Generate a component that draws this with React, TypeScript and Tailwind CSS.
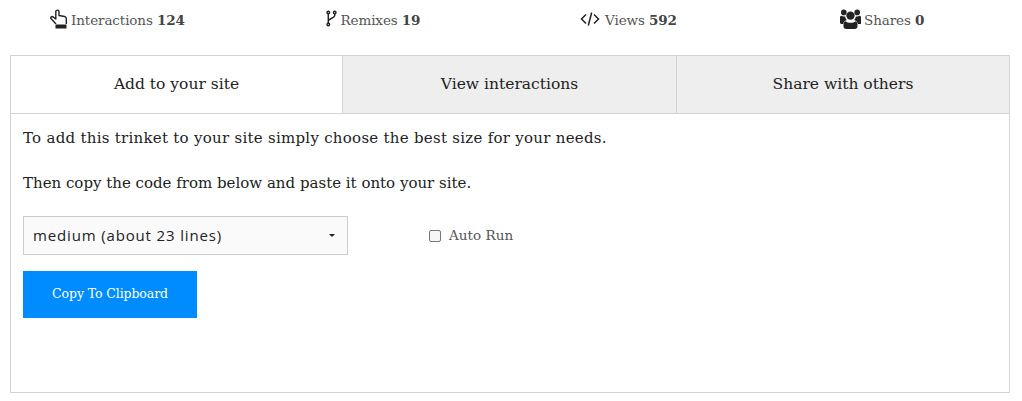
function Stat({ icon, label, value, cls }: { icon: React.ReactNode; label: string; value: string; cls: string }) {
  return (
    <div className={`flex items-center ${cls}`}>
      {icon}
      <span className="text-[13.5px] tracking-[-0.1px] text-[#555]">{label} <b className="font-bold text-[#444]">{value}</b></span>
    </div>
  );
}

export default function App() {
  return (
    <div className="w-[1022px] h-[401px] bg-white font-['DejaVu_Serif',serif] overflow-hidden">
      <div className="h-[55px] grid grid-cols-4 pt-[10px] px-[10px] items-start">
        <Stat cls="pl-[40px] gap-[4px]" label="Interactions" value="124" icon={
          <svg viewBox="0 0 17 20" className="w-[17px] h-[20px] -mt-[2px] text-[#222]" fill="none" stroke="currentColor" strokeWidth="1.4" strokeLinejoin="round">
            <path d="M6 15 1 9.500c-.8-1 .6-2.600 2-1.600L5.800 10V2.500c0-1.800 3.200-1.800 3.200 0V6.500l5.500 1c1 .2 1.800.9 1.800 2V15" />
            <rect x="5.500" y="15.500" width="11" height="4" rx=".6" fill="currentColor" stroke="none" />
          </svg>} />
        <Stat cls="pl-[65px] gap-[4px]" label="Remixes" value="19" icon={
          <svg viewBox="0 0 12 18" className="w-[11px] h-[17px] -mt-[3px] text-[#222]" fill="none" stroke="currentColor" strokeWidth="1.6">
            <circle cx="2.500" cy="2.500" r="1.400" /><circle cx="2.500" cy="15.500" r="1.400" /><circle cx="9.500" cy="2.500" r="1.400" />
            <path d="M2.500 4v10M9.500 4v2c0 2.500-7 3-7 6" />
          </svg>} />
        <Stat cls="pl-[69px] gap-[5px]" label="Views" value="592" icon={
          <svg viewBox="0 0 20 16" className="w-[20px] h-[16px] -mt-[2px] text-[#222]" fill="none" stroke="currentColor" strokeWidth="1.5">
            <path d="M6 3.500 1.500 8 6 12.500M14 3.500 18.500 8 14 12.500M11.700 1.500 8.300 14.500" />
          </svg>} />
        <Stat cls="pl-[78px] gap-[3.5px]" label="Shares" value="0" icon={
          <svg viewBox="0 0 21 20" className="w-[21px] h-[20px] -mt-[2px] text-[#222]" fill="currentColor">
            <circle cx="3.800" cy="3.400" r="2.800" /><circle cx="17.200" cy="3.400" r="2.800" /><circle cx="10.500" cy="6.600" r="4.200" />
            <path d="M5.500 12.200c1.300 1 3 1.600 5 1.600s3.700-.6 5-1.600c1.500.4 2 1.700 2 3.300v2c0 1.500-1.200 2.500-2.800 2.500H6.300c-1.600 0-2.800-1-2.800-2.500v-2c0-1.600.5-2.900 2-3.300z" />
            <path d="M0 8.500C0 7.300.6 6.800 1.500 6.800c.7.5 1.500.8 2.400.8.500 0 .9-.1 1.300-.2.100 1.500.8 2.800 1.800 3.700-1.700.3-3.500 1.800-3.900 4H1.800C.7 15.100 0 14.400 0 13.300z" />
            <path d="M21 8.500c0-1.200-.6-1.700-1.500-1.700-.7.5-1.500.8-2.400.8-.5 0-.9-.1-1.300-.2-.1 1.500-.8 2.800-1.800 3.700 1.700.3 3.500 1.800 3.900 4h1.900c1.100 0 1.700-.7 1.700-1.800z" />
          </svg>} />
      </div>
      <div className="mx-[10px] w-[1000px] h-[338px] border border-[#d3d3d3]">
        <div className="flex h-[58px] border-b border-[#d3d3d3] text-[15.5px] text-[#222]">
          <div className="w-[332px] flex items-center justify-center border-r border-[#d3d3d3]">Add to your site</div>
          <div className="w-[334px] flex items-center justify-center border-r border-[#d3d3d3] bg-[#eee]">View interactions</div>
          <div className="flex-1 flex items-center justify-center bg-[#eee]">Share with others</div>
        </div>
        <div className="px-3 pt-[13px]">
          <p className="text-[15px] tracking-[0.27px] leading-[22px] text-[#222]">To add this trinket to your site simply choose the best size for your needs.</p>
          <p className="text-[15px] leading-[22px] text-[#222] mt-[23px]">Then copy the code from below and paste it onto your site.</p>
          <div className="flex items-center mt-[22px]">
            <div className="w-[325px] h-[39px] border border-[#ccc] bg-[#fafafa] flex items-center justify-between pl-[9px] pr-[12px] font-['Open_Sans',sans-serif] text-[15px] tracking-[0.85px] text-[#222]">
              <span>medium (about 23 lines)</span>
              <span className="w-0 h-0 border-x-[3px] border-x-transparent border-t-[3px] border-t-[#222]" />
            </div>
            <div className="ml-[81px] w-[12px] h-[12px] border border-[#777] rounded-[2px] bg-[#f6f6f6] mt-[1px]" />
            <span className="ml-[8px] text-[13.5px] tracking-[0.05px] text-[#555]">Auto Run</span>
          </div>
          <button className="mt-[16px] w-[174px] h-[47px] bg-[#008cff] text-white text-[12.5px] tracking-[-0.1px] flex items-center justify-center">Copy To Clipboard</button>
        </div>
      </div>
    </div>
  );
}
